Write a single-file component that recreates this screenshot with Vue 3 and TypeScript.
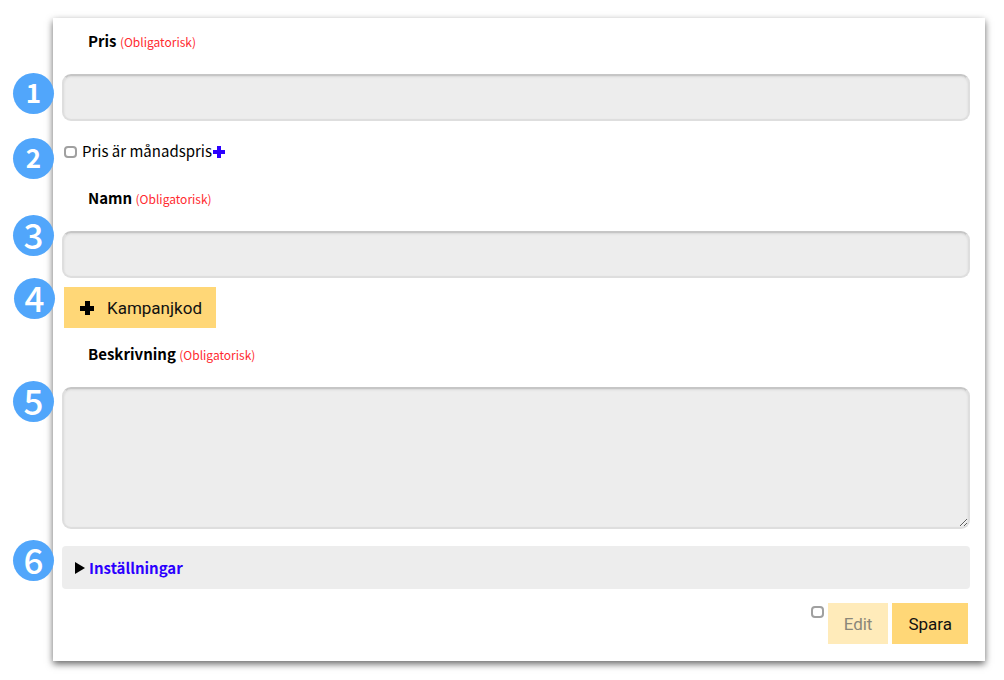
<script setup lang="ts">
import { ref } from 'vue'

const price = ref('')
const monthly = ref(false)
const name = ref('')
const description = ref('')
const editable = ref(false)
</script>

<template>
  <form class="card" @submit.prevent>
    <label class="heading" for="price"><b>Pris</b> <span class="required">(Obligatorisk)</span></label>
    <div class="anchor">
      <span class="badge small one">1</span>
      <input id="price" v-model="price" class="field" type="text" />
    </div>

    <div class="anchor monthly">
      <span class="badge small two">2</span>
      <input id="monthly" v-model="monthly" class="tick" type="checkbox" />
      <label for="monthly">Pris är månadspris</label>
      <svg class="help" viewBox="0 0 12 12" aria-hidden="true"><path d="M4 0h4v4h4v4H8v4H4V8H0V4h4z" /></svg>
    </div>

    <label class="heading" for="name"><b>Namn</b> <span class="required">(Obligatorisk)</span></label>
    <div class="anchor">
      <span class="badge three">3</span>
      <input id="name" v-model="name" class="field" type="text" />
    </div>

    <div class="anchor campaign">
      <span class="badge four">4</span>
      <button class="button" type="button">
        <svg class="plus" viewBox="0 0 14 14" aria-hidden="true"><path d="M5 0h5v5h4v5h-4v4H5v-4H0V5h5z" /></svg>
        Kampanjkod
      </button>
    </div>

    <label class="heading" for="description"><b>Beskrivning</b> <span class="required">(Obligatorisk)</span></label>
    <div class="anchor">
      <span class="badge five">5</span>
      <textarea id="description" v-model="description" class="field area"></textarea>
    </div>

    <div class="anchor settings">
      <span class="badge six">6</span>
      <details>
        <summary>
          <svg class="arrow" viewBox="0 0 10 12" aria-hidden="true"><path d="M0 0l10 6-10 6z" /></svg>
          <span>Inställningar</span>
        </summary>
      </details>
    </div>

    <div class="actions">
      <input v-model="editable" class="tick" type="checkbox" aria-label="Edit" />
      <button class="button" type="button" disabled>Edit</button>
      <button class="button" type="submit">Spara</button>
    </div>
  </form>
</template>

<style>
body {
  background: #fff;
}
</style>

<style scoped>
.card {
  margin: 18px 19px 19px 53px;
  padding: 0 15px 16px 9px;
  background: #fff;
  box-shadow: 0 3px 7px rgba(0, 0, 0, 0.6);
  color: #000;
  font: 15px/24px "Noto Sans CJK SC", "Noto Sans", sans-serif;
}
.heading {
  display: block;
  height: 56px;
  padding-left: 26px;
  box-sizing: border-box;
  line-height: 46px;
}
.required {
  color: #ff2a2f;
  font-size: 12px;
}
.anchor {
  position: relative;
}
.field {
  display: block;
  box-sizing: border-box;
  width: 100%;
  height: 47px;
  margin: 0;
  padding: 8px 12px;
  border: 2px solid #dedede;
  border-top-color: #c6c6c6;
  border-radius: 9px;
  background: #ededed;
  box-shadow: inset 0 1px 2px #d8d8d8;
  font: inherit;
  outline: 0;
}
.area {
  height: 142px;
  resize: vertical;
}
.badge {
  position: absolute;
  left: -49px;
  width: 41px;
  height: 41px;
  border-radius: 50%;
  background: #51a6fb;
  color: #fff;
  font: 500 35px/38px "Noto Sans CJK SC", sans-serif;
  text-align: center;
}
.small {
  font-size: 26px;
  font-weight: 700;
}
.one {
  top: -1px;
}
.two {
  top: 9px;
}
.three {
  top: -16px;
}
.four {
  top: -9px;
  left: -48px;
}
.five {
  top: -6px;
}
.six {
  top: -6px;
}
.monthly {
  display: flex;
  align-items: center;
  height: 46px;
  margin-top: 8px;
  padding-left: 2px;
}
.monthly label {
  padding-bottom: 2px;
}
.tick {
  appearance: none;
  box-sizing: border-box;
  width: 13px;
  height: 12px;
  margin: 0 5px 0 0;
  border: 2px solid #a0a0a0;
  border-radius: 4px;
  background: #fff;
}
.tick:checked {
  background: #51a6fb;
}
.help {
  width: 12px;
  height: 12px;
  margin-left: 1px;
  fill: #2b00ff;
}
.campaign {
  margin: 9px 0 3px;
  padding-left: 2px;
}
.button {
  display: inline-flex;
  align-items: center;
  height: 41px;
  padding: 0 16px;
  border: 0;
  background: #ffd777;
  color: #111;
  font: 17px/24px Roboto, sans-serif;
}
.button:disabled {
  background: #ffebba;
  color: #8b8779;
}
.campaign .button {
  display: flex;
  padding-right: 14px;
}
.plus {
  width: 14px;
  height: 14px;
  margin-right: 13px;
}
.settings {
  margin-top: 17px;
}
details {
  border-radius: 4px;
  background: #ededed;
}
summary {
  display: flex;
  align-items: center;
  height: 43px;
  padding-left: 13px;
  color: #2b00ff;
  font-weight: 700;
  list-style: none;
}
.arrow {
  width: 10px;
  height: 12px;
  margin-right: 4px;
  fill: #000;
}
.actions {
  display: flex;
  justify-content: flex-end;
  gap: 4px;
  margin-top: 14px;
  padding: 0 2px 1px 0;
}
.actions .tick {
  margin: 3px 0 0;
}
</style>
